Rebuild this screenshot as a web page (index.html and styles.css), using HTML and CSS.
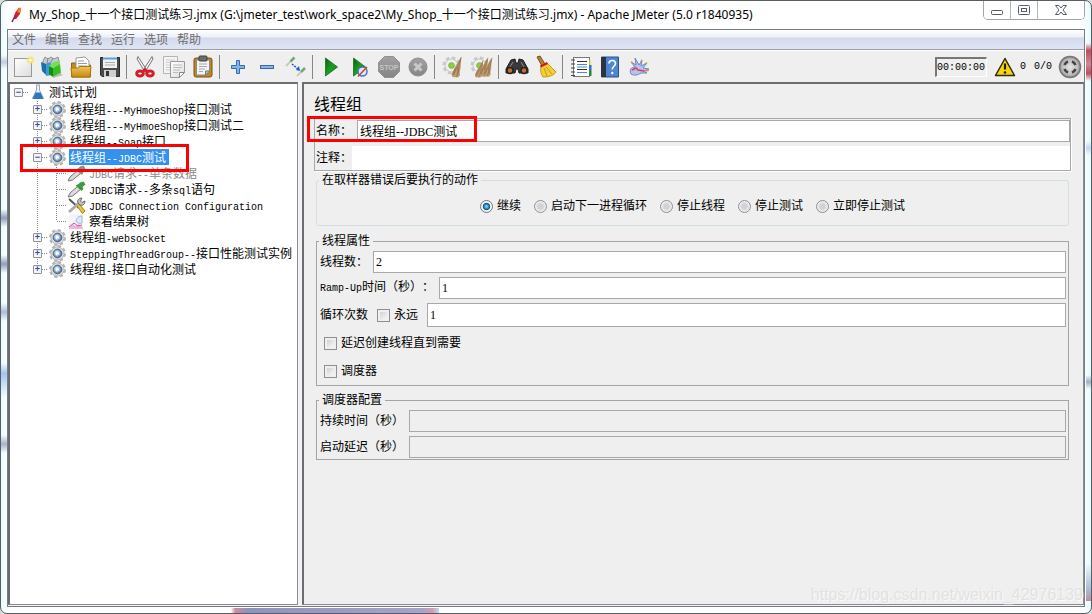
FILE: index.html
```html
<!DOCTYPE html>
<html lang="zh-CN">
<head>
<meta charset="utf-8">
<title>Apache JMeter</title>
<link rel="stylesheet" href="styles.css">
</head>
<body>
<svg class="defs" aria-hidden="true">
  <defs>
    <linearGradient id="gPlay" x1="0" y1="0" x2="1" y2="1"><stop offset="0" stop-color="#0b5d12"/><stop offset=".5" stop-color="#18a020"/><stop offset="1" stop-color="#0c7a14"/></linearGradient>
    <linearGradient id="gGray" x1="0" y1="0" x2="0" y2="1"><stop offset="0" stop-color="#a2a2a2"/><stop offset="1" stop-color="#858585"/></linearGradient>
    <linearGradient id="gPaper" x1="0" y1="0" x2="1" y2="1"><stop offset="0" stop-color="#fff"/><stop offset="1" stop-color="#dcdcdc"/></linearGradient>
    <linearGradient id="gGold" x1="0" y1="0" x2="0" y2="1"><stop offset="0" stop-color="#efc45a"/><stop offset="1" stop-color="#c98a10"/></linearGradient>
    <radialGradient id="gBall" cx=".45" cy=".45" r=".6"><stop offset="0" stop-color="#ffffff"/><stop offset=".35" stop-color="#c4daf0"/><stop offset=".75" stop-color="#5c86b8"/><stop offset="1" stop-color="#3f5f88"/></radialGradient>
    <radialGradient id="gRound"><stop offset="0" stop-color="#e4e4e4"/><stop offset=".75" stop-color="#bcbcbc"/><stop offset="1" stop-color="#8a8a8a"/></radialGradient>
    <symbol id="gear" viewBox="0 0 19 17">
      <circle cx="9.500" cy="8.500" r="7.200" fill="none" stroke="#b4b4b4" stroke-width="2.600" stroke-dasharray="3.200 2.450"/>
      <circle cx="9.500" cy="8.500" r="6.600" fill="#dadada" stroke="#b8b8b8"/>
      <circle cx="9.500" cy="8.500" r="4.300" fill="url(#gBall)" stroke="#54667e"/>
      <path d="M8 6.500l3.500 2L8 10.500z" fill="#fff"/>
    </symbol>
    <symbol id="gearGreen" viewBox="0 0 20 20">
      <circle cx="10" cy="10" r="7.500" fill="none" stroke="#c9c9c9" stroke-width="4" stroke-dasharray="3.500 2.400"/>
      <circle cx="10" cy="10" r="6.800" fill="#efefef" stroke="#c4c4c4"/>
      <circle cx="10" cy="10" r="3" fill="#8cd42c" stroke="#84ad55"/>
    </symbol>
    <symbol id="twig" viewBox="0 0 12 22">
      <path d="M10.500 1L5 10 1 18l1 3 6 .5 2-9z" fill="#bd9a70"/>
      <path d="M11 1L3 19M10.500 3L6 21M7 11l2 9M5 12l-3 7" stroke="#8d6a44" stroke-width=".7" fill="none"/>
    </symbol>
    <symbol id="sampler" viewBox="0 0 19 17">
      <path d="M1 16l2-4L10.500 5.500l3 3L5.500 15z" class="glass"/>
      <path d="M8.500 4.500L14.500 10l2-2-1-2L18.500 3.500 16.500 .5 13 1.500 11.500 3z" fill="currentColor"/>
    </symbol>
  </defs>
</svg>
<div class="window">
  <header class="titlebar">
    <svg class="app-icon" viewBox="0 0 12 18"><path d="M2 16l2-4" stroke="#5c2a6b" stroke-width="1.500"/><path d="M3 13L5 7l4-5.500 2 1L10 8l-4 5z" fill="#d3202f"/><path d="M7 6l2.500-4.500 1.800 1L10 7z" fill="#f08a1d"/><path d="M3.500 13l1.500-4 2 3z" fill="#9b1c6e"/></svg>
    <h1 class="title">My_Shop_十一个接口测试练习.jmx (G:\jmeter_test\work_space2\My_Shop_十一个接口测试练习.jmx) - Apache JMeter (5.0 r1840935)</h1>
    <div class="win-buttons">
      <button type="button" aria-label="最小化"><svg width="14" height="12" viewBox="0 0 14 12"><rect x="1.500" y="6.500" width="11" height="4" rx="1" fill="#fff" stroke="#555b66"/></svg></button>
      <button type="button" aria-label="最大化"><svg width="14" height="12" viewBox="0 0 14 12"><rect x="1.500" y="1.500" width="11" height="9" rx="1" fill="#fff" stroke="#555b66"/><rect x="4.500" y="4.500" width="5" height="3" fill="#fff" stroke="#555b66"/></svg></button>
      <button type="button" class="close" aria-label="关闭"><svg width="14" height="12" viewBox="0 0 14 12"><path d="M1.500 1.500h3.500L7 4l2-2.500h3.500L9 6l3.500 4.500H9L7 8l-2 2.500H1.500L5 6z" fill="#fff" stroke="#555b66"/></svg></button>
    </div>
  </header>
  <div class="frame">
    <nav class="menubar">
      <a href="#">文件</a><a href="#">编辑</a><a href="#">查找</a><a href="#">运行</a><a href="#">选项</a><a href="#">帮助</a>
    </nav>
    <div class="toolbar">
      <button type="button" aria-label="新建"><svg viewBox="0 0 24 24"><rect x="3.500" y="3.500" width="17" height="18" fill="url(#gPaper)" stroke="#999"/><circle cx="19.500" cy="5" r="3.500" fill="#f6e564" opacity=".85"/><circle cx="19.500" cy="5" r="1.500" fill="#fffbd0"/></svg></button>
      <button type="button" aria-label="模板"><svg viewBox="0 0 24 24"><path d="M3 6l2-4 3 2 3-2 3 2 4-2 1 4v6H3z" fill="#c3cbce" stroke="#87949a"/><path d="M8 3l-1 6M13 3l-3 6" stroke="#7d898e"/><path d="M1 7l5 2v11l-4-4z" fill="#1c6ea6"/><path d="M6 9l4-2 2 4v9l-6 1z" fill="#3c9ad6"/><path d="M9 11l4 2v9l-4-3z" fill="#178a12"/><path d="M13 13l7-4 1 9-8 4z" fill="#37bf20"/><path d="M14 7l5-1 1 3-7 4-4-2z" fill="#77dd55"/><path d="M20 18l3 2-10 3v-1z" fill="#b9b9b9"/></svg></button>
      <button type="button" aria-label="打开"><svg viewBox="0 0 24 24"><path d="M2.500 22V8h6l2 2h11v12z" fill="#c58c1c" stroke="#8d6510"/><path d="M7 15V3l9-1 4 4v9z" fill="#fff" stroke="#999"/><path d="M9 6h6M9 8.500h9M9 11h9" stroke="#999"/><path d="M3 22l-1-9h7l2-1.500h11L21 22z" fill="url(#gGold)" stroke="#a8780f"/></svg></button>
      <button type="button" aria-label="保存"><svg viewBox="0 0 24 24"><path d="M2.500 2.500h19v19H4l-1.500-1.500z" fill="#4b4b4b" stroke="#2c2c2c"/><rect x="5" y="2" width="14" height="11" fill="#eef2f5"/><path d="M5 3.500h14" stroke="#5c9fd0" stroke-width="2"/><path d="M7 7.500h10M7 10h10" stroke="#aaa"/><rect x="6" y="15" width="12" height="7" fill="#cfcfcf"/><rect x="8" y="16" width="3" height="5" fill="#333"/></svg></button>
      <span class="sep"></span>
      <button type="button" aria-label="剪切"><svg viewBox="0 0 24 24"><path d="M5 1.500l9 14-2 1.500L4 4zM19 1.500l-9 14 2 1.500L20 4z" fill="#f3f3f3" stroke="#777"/><ellipse cx="7" cy="18.500" rx="3.300" ry="2.600" fill="none" stroke="#d31c25" stroke-width="3"/><ellipse cx="17" cy="18.500" rx="3.300" ry="2.600" fill="none" stroke="#d31c25" stroke-width="3"/><path d="M9 15l3-2 3 2-3 2z" fill="#d31c25"/></svg></button>
      <button type="button" aria-label="复制"><svg viewBox="0 0 24 24"><path d="M1.500 1.500h14v17h-14z" fill="#f4f4f4" stroke="#b5b5b5"/><path d="M4 5h9M4 7.500h9M4 10h4M4 12.500h4M4 15h4" stroke="#ccc"/><path d="M8.500 6.500h14v11l-5 5h-9z" fill="url(#gPaper)" stroke="#999"/><path d="M11 10h9M11 12.500h9M11 15h7M11 17.500h5" stroke="#bbb"/><path d="M17.500 22.500v-5h5z" fill="#fff" stroke="#888"/></svg></button>
      <button type="button" aria-label="粘贴"><svg viewBox="0 0 24 24"><rect x="3" y="3" width="18" height="19" rx="2" fill="#c1852b" stroke="#7c5212"/><path d="M5.500 5h13v11l-4 4h-9z" fill="#f4f4f4" stroke="#8a8a8a"/><path d="M8 9h8M8 11.500h8M8 14h6M8 16.500h4" stroke="#aaa"/><rect x="8" y="1" width="8" height="5" rx="1" fill="#69706c" stroke="#3f4441"/><path d="M14.500 20v-4h4z" fill="#ccc" stroke="#777"/></svg></button>
      <span class="sep"></span>
      <button type="button" aria-label="展开"><svg viewBox="0 0 24 24"><path d="M10.500 5.500h3v5h5v3h-5v5h-3v-5h-5v-3h5z" fill="#84b4ea" stroke="#3669ad"/></svg></button>
      <button type="button" aria-label="折叠"><svg viewBox="0 0 24 24"><rect x="5.500" y="10.500" width="13" height="3" fill="#84b4ea" stroke="#3669ad"/></svg></button>
      <button type="button" aria-label="切换"><svg viewBox="0 0 24 24"><path d="M2 11l6-6M13 21l5-5" stroke="#c9c9c9" stroke-width="2"/><path d="M6.500 6.500l4-4M17 17l4-4" stroke="#74a873" stroke-width="2.500"/><path d="M8 9l6 5" stroke="#2458c8" stroke-width="1.500" stroke-dasharray="2 1"/><path d="M16 16l-1-5-3 4z" fill="#2458c8"/></svg></button>
      <span class="sep"></span>
      <button type="button" aria-label="启动"><svg viewBox="0 0 24 24"><path d="M6.500 3l12 9-12 9z" fill="url(#gPlay)" stroke="#2b7d31"/></svg></button>
      <button type="button" aria-label="不停顿启动"><svg viewBox="0 0 24 24"><path d="M5.500 3l12 9-12 9z" fill="url(#gPlay)" stroke="#2b7d31"/><circle cx="14.500" cy="16.500" r="4.500" fill="#dce9f8" stroke="#4377bf" stroke-width="1.500"/><path d="M10 21.500l9-9.500" stroke="#d4393b" stroke-width="1.500"/></svg></button>
      <button type="button" aria-label="停止" disabled><svg viewBox="0 0 24 24"><path d="M7.500 1.500h9l6 6v9l-6 6h-9l-6-6v-9z" fill="url(#gGray)" stroke="#919191"/><text x="12" y="15" text-anchor="middle" class="stop-text">STOP</text></svg></button>
      <button type="button" aria-label="关闭线程" disabled><svg viewBox="0 0 24 24"><circle cx="12" cy="12" r="9" fill="url(#gGray)" stroke="#8d8d8d"/><path d="M8.500 8.500l7 7M15.500 8.500l-7 7" stroke="#c8c8c8" stroke-width="3"/></svg></button>
      <span class="sep"></span>
      <button type="button" aria-label="清除"><svg viewBox="0 0 24 24"><use href="#gearGreen" x="1" y="1" width="19" height="19"/><use href="#twig" x="9" y="1" width="13" height="22"/></svg></button>
      <button type="button" aria-label="清除全部"><svg viewBox="0 0 24 24"><use href="#gearGreen" x="0" y="1" width="19" height="19"/><use href="#twig" x="4" y="5" width="10" height="18"/><use href="#twig" x="8" y="1" width="11" height="22"/><use href="#twig" x="12" y="1" width="11" height="22"/></svg></button>
      <span class="sep"></span>
      <button type="button" aria-label="查找"><svg viewBox="0 0 24 24"><path d="M6 5l4-1 1 4h2l1-4 4 1 5 9v4h-9l-1-4h-2l-1 4H1v-4z" fill="#3a3a3a" stroke="#1d1d1d"/><circle cx="5" cy="15.500" r="3" fill="#c86a34" stroke="#222" stroke-width="1.500"/><circle cx="19" cy="15.500" r="3" fill="#c86a34" stroke="#222" stroke-width="1.500"/><path d="M8 7l-3 5M16 7l3 5" stroke="#888"/></svg></button>
      <button type="button" aria-label="重置查找"><svg viewBox="0 0 24 24"><path d="M3 2l3-1 5 8-3 2z" fill="#b98034" stroke="#7a4d13"/><path d="M7 11l6-3 9 9c-2 3-6 5-13 5-2-3-3-6-2-11z" fill="#f3cf36" stroke="#c59c1a"/><path d="M6.500 11.500l7-3.500" stroke="#c52222" stroke-width="2.500"/><path d="M10 13l3 8M12 12l6 7" stroke="#c59c1a"/></svg></button>
      <span class="sep"></span>
      <button type="button" aria-label="函数助手"><svg viewBox="0 0 24 24"><rect x="4.500" y="2.500" width="16" height="19" fill="#fff" stroke="#777"/><path d="M2 5h4M2 9h4M2 13h4M2 17h4M2 20.500h4" stroke="#444"/><path d="M8 6.500h10M8 14.500h10" stroke="#333"/><path d="M8 9.500h10M8 12h10M8 17.500h10" stroke="#4a86d8"/><path d="M21.500 5v5" stroke="#e8e9a0" stroke-width="2"/><path d="M21.500 10v5" stroke="#2b6fd0" stroke-width="2"/><path d="M21.500 15v6" stroke="#1b8a2c" stroke-width="2"/></svg></button>
      <button type="button" aria-label="帮助"><svg viewBox="0 0 24 24"><path d="M3.500 2h17v20h-17z" fill="#4d86cf" stroke="#2c5087"/><path d="M3 2h5v20H3z" fill="#2a3442"/><path d="M11 8.500c0-4 6.500-4 6.500 0 0 3-3.200 2.500-3.200 6" stroke="#fff" stroke-width="1.600" fill="none"/><circle cx="14.300" cy="18" r="1.200" fill="#fff"/></svg></button>
      <button type="button" aria-label="Apache"><svg viewBox="0 0 24 24"><path d="M4 19c-2-4 0-7 4-7L4 7l5 3-1-7 4 7 3-5-1 6 6-3-4 5 6 1-5 2 3 2-6 0c-3 2-7 3-10 1z" fill="#b4c2ec" stroke="#7284ca"/><path d="M5 15l4-2 2 2 6 1" stroke="#d6414d" stroke-width="1.500" fill="none"/><path d="M19 16l3-1M14 5l1 1M4 7l2 1M18 9l2-1" stroke="#e0963c" stroke-width="1.500"/></svg></button>
      <div class="status">
        <output class="timer">00:00:00</output>
        <svg class="warn" viewBox="0 0 22 20"><path d="M11 1.500L20.500 18.500h-19z" fill="#f8d408" stroke="#2b2a10" stroke-width="1.500" stroke-linejoin="round"/><path d="M11 6.500v6" stroke="#222" stroke-width="2.200"/><circle cx="11" cy="15.500" r="1.300" fill="#222"/></svg>
        <span class="count">0</span><span class="count total">0/0</span>
        <svg class="round" viewBox="0 0 24 24"><circle cx="12" cy="12" r="10.500" fill="url(#gRound)" stroke="#777" stroke-width="1.500"/><path d="M6.500 10A6 6 0 0 1 10 6.500M14 6.500A6 6 0 0 1 17.500 10M17.500 14A6 6 0 0 1 14 17.500M10 17.500A6 6 0 0 1 6.500 14" stroke="#444" stroke-width="2.600" fill="none"/></svg>
      </div>
    </div>
    <div class="panes">
      <aside class="tree-pane">
        <div class="row"><button type="button" class="exp" aria-label="折叠">−</button><i class="dots"></i>
          <svg class="flask" viewBox="0 0 16 16"><path d="M6 1h4M6.500 1v5L2.500 14.500h11L9.500 6V1" fill="#e9f0f7" stroke="#97a6b5"/><path d="M5.500 8.500h5l3 6.500h-11z" fill="#2e78bd"/></svg><span class="label">测试计划</span></div>
        <ul class="level1">
          <li class="row"><button type="button" class="exp" aria-label="展开">+</button><i class="dots"></i><svg class="node"><use href="#gear"/></svg><span class="label">线程组<b>---MyHmoeShop</b>接口测试</span></li>
          <li class="row"><button type="button" class="exp" aria-label="展开">+</button><i class="dots"></i><svg class="node"><use href="#gear"/></svg><span class="label">线程组<b>---MyHmoeShop</b>接口测试二</span></li>
          <li class="row"><button type="button" class="exp" aria-label="展开">+</button><i class="dots"></i><svg class="node"><use href="#gear"/></svg><span class="label">线程组<b>--Soap</b>接口</span></li>
          <li>
            <div class="row marked"><button type="button" class="exp" aria-label="折叠">−</button><i class="dots"></i><svg class="node"><use href="#gear"/></svg><span class="label selected">线程组<b>--JDBC</b>测试</span></div>
            <ul class="level2">
              <li class="row"><i class="dots"></i><svg class="node off"><use href="#sampler"/></svg><span class="label disabled"><b>JDBC</b>请求<b>--</b>单条数据</span></li>
              <li class="row"><i class="dots"></i><svg class="node on"><use href="#sampler"/></svg><span class="label"><b>JDBC</b>请求<b>--</b>多条<b>sql</b>语句</span></li>
              <li class="row"><i class="dots"></i><svg class="node" viewBox="0 0 19 17"><path d="M2 2l10 9" stroke="#555" stroke-width="1.800"/><path d="M10 9l2-2 6 7-2.500 2.500z" fill="#f0c52a" stroke="#a67d0d"/><path d="M2 15L12 6" stroke="#aaa" stroke-width="3"/><path d="M11 6c-1-3 1-5 4-5l-1.500 3L15 5.500 18 4c0 3-2 5-5 4z" fill="#c5c5c5" stroke="#666"/></svg><span class="label"><b>JDBC Connection Configuration</b></span></li>
              <li class="row"><i class="dots"></i><svg class="node" viewBox="0 0 19 17"><rect x="2" y="1" width="14" height="15" fill="#f6f4fb"/><path d="M2 15l4-4 3 2 3-2 4 4v1H2z" fill="#efb5d8"/><path d="M2 14l5-4 4 3 4-1" stroke="#c657a0" fill="none"/><path d="M9 8c1-4 3-5 6-5v7c-3 1-5 0-6-2z" fill="#dce9fa" stroke="#9db9e2"/></svg><span class="label">察看结果树</span></li>
            </ul>
          </li>
          <li class="row"><button type="button" class="exp" aria-label="展开">+</button><i class="dots"></i><svg class="node"><use href="#gear"/></svg><span class="label">线程组<b>-websocket</b></span></li>
          <li class="row"><button type="button" class="exp" aria-label="展开">+</button><i class="dots"></i><svg class="node"><use href="#gear"/></svg><span class="label"><b>SteppingThreadGroup--</b>接口性能测试实例</span></li>
          <li class="row"><button type="button" class="exp" aria-label="展开">+</button><i class="dots"></i><svg class="node"><use href="#gear"/></svg><span class="label">线程组<b>-</b>接口自动化测试</span></li>
        </ul>
      </aside>
      <main class="editor">
        <h2>线程组</h2>
        <div class="ident">
          <div class="field name"><label for="name">名称：</label><input id="name" type="text" value="线程组--JDBC测试"></div>
          <div class="field note"><label for="note">注释：</label><input id="note" type="text"></div>
        </div>
        <fieldset class="action">
          <legend>在取样器错误后要执行的动作</legend>
          <label><input type="radio" name="act" checked>继续</label>
          <label><input type="radio" name="act">启动下一进程循环</label>
          <label><input type="radio" name="act">停止线程</label>
          <label><input type="radio" name="act">停止测试</label>
          <label><input type="radio" name="act">立即停止测试</label>
        </fieldset>
        <fieldset class="props">
          <legend>线程属性</legend>
          <div class="field"><label for="threads">线程数：</label><input id="threads" type="text" value="2"></div>
          <div class="field"><label for="ramp"><b>Ramp-Up</b>时间（秒）：</label><input id="ramp" type="text" value="1"></div>
          <div class="field loops"><label for="loops">循环次数</label><label class="check"><input type="checkbox">永远</label><input id="loops" type="text" value="1"></div>
          <label class="check line"><input type="checkbox">延迟创建线程直到需要</label>
          <label class="check line"><input type="checkbox">调度器</label>
        </fieldset>
        <fieldset class="sched">
          <legend>调度器配置</legend>
          <div class="field"><label for="dur">持续时间（秒）</label><input id="dur" type="text" disabled></div>
          <div class="field"><label for="delay">启动延迟（秒）</label><input id="delay" type="text" disabled></div>
        </fieldset>
      </main>
    </div>
  </div>
  <div class="watermark">https://blog.csdn.net/weixin_42976139</div>
</div>
</body>
</html>
```
FILE: styles.css
```css
*, *::before, *::after { box-sizing: border-box; }
body {
  margin: 0;
  background: #d9dcdd;
  font: 12px/16px "Liberation Serif", "Noto Sans CJK SC", sans-serif;
  color: #000;
  text-spacing-trim: space-all;
}
button, input { font: inherit; color: inherit; margin: 0; padding: 0; }
button { background: none; border: 0; }
ul { list-style: none; margin: 0; padding: 0; }
b { font: 10px/16px "Liberation Mono", monospace; }
.defs { position: absolute; width: 0; height: 0; }

.window {
  position: relative;
  display: flex;
  flex-direction: column;
  height: 100vh;
  padding: 0 6px 6px;
  border: 1px solid #5b5e60;
  border-radius: 7px;
  background:
    linear-gradient(90deg, #cfe4ff00, #d08ba0 2%, #8f93bb 8%, #a6a4c8 92%, #d59bb0 97%, #b9dcff) 230px 100% / 208px 5px no-repeat,
    linear-gradient(#c8485800, #c84858 20%, #d58594 55%, #c84858 80%, #c8485800) 100% 42px / 5px 38px no-repeat,
    linear-gradient(#b8d4f000, #a9bbd8 70%, #c08ba0) 100% 562px / 5px 38px no-repeat,
    linear-gradient(#9cb0c800, #9cb0c8, #9cb0c800) 100% 374px / 5px 14px no-repeat,
    linear-gradient(#bcd9f500, #bcd9f5, #bcd9f500) 100% 140px / 5px 14px no-repeat,
    linear-gradient(#8e9fb800, #8e9fb8, #8e9fb800) 0 208px / 6px 18px no-repeat,
    linear-gradient(#8e9fb800, #8e9fb8, #8e9fb800) 0 254px / 6px 18px no-repeat,
    linear-gradient(#a9bcdc00, #a9bcdc, #a9bcdc00) 0 302px / 6px 18px no-repeat,
    linear-gradient(#a4c4f000, #a4c4f0 30%, #a4c4f000) 0 362px / 6px 34px no-repeat,
    linear-gradient(#a4b4cc00, #a4b4cc, #a4b4cc00) 0 434px / 6px 18px no-repeat,
    linear-gradient(#c0cce400, #c0cce4, #c0cce400) 0 54px / 6px 14px no-repeat,
    linear-gradient(90deg, #e9fcff, #fff 8px, #fff calc(100% - 8px), #e2fbff);
}
.titlebar { display: flex; align-items: flex-start; height: 28px; flex: none; padding-left: 3px; }
.app-icon { width: 12px; height: 18px; margin-top: 5px; }
.title {
  flex: 1;
  margin: 5px 0 0 7px;
  font: 12px/18px "Noto Sans", "Noto Sans CJK SC", sans-serif;
  white-space: nowrap;
}
.win-buttons { display: flex; border: 1px solid #a2a5a8; border-top: 0; border-radius: 0 0 5px 5px; overflow: hidden; }
.win-buttons button { width: 27px; height: 18px; border-right: 1px solid #b4b7ba; background: #fff; line-height: 0; }
.win-buttons .close { width: 46px; border-right: 0; }

.frame { flex: 1; min-height: 0; display: flex; flex-direction: column; border: 1px solid #777b82; background: #efefef; }
.menubar {
  display: flex;
  gap: 9px;
  height: 20px;
  flex: none;
  padding: 2px 4px;
  border-bottom: 1px solid #9a9da6;
  background: linear-gradient(#fff, #eef0f8 7px, #d4daec 8px, #dfe5f4);
}
.menubar a { color: #6d6d6d; text-decoration: none; }
.toolbar { display: flex; align-items: center; height: 32px; flex: none; border-top: 1px solid #fff; }
.toolbar button { width: 29px; height: 29px; line-height: 0; }
.toolbar button svg { width: 24px; height: 24px; }
.sep { width: 2px; height: 24px; margin: 0 2px; border-left: 1px solid #868686; }
.stop-text { font: bold 7px "Liberation Sans", sans-serif; fill: #c5c5c5; }
.status { display: flex; align-items: center; margin-left: auto; padding-right: 2px; }
.timer {
  width: 52px;
  height: 20px;
  border: 1px solid #fff;
  border-top: 2px solid #777;
  border-left: 2px solid #777;
  font: 10px/17px "Liberation Mono", monospace;
}
.warn { width: 22px; height: 20px; margin-left: 7px; }
.count { margin-left: 4px; font: 10px/16px "Liberation Mono", monospace; }
.total { margin: 0 6px 0 8px; }
.round { width: 24px; height: 24px; }

.panes { flex: 1; min-height: 0; display: grid; grid-template-columns: 290px minmax(0, 1fr); gap: 4px; padding-bottom: 1px; background: #f3f3f3; }
.tree-pane { border: 1px solid #7d8088; border-width: 2px 1px 1px 2px; border-color: #6b6d72 #8b8d95 #8b8d95 #6b6d72; background: #fff; }
.row { display: flex; align-items: center; height: 16px; white-space: nowrap; }
.tree-pane > .row { padding-left: 4px; }
.exp { flex: none; width: 9px; height: 9px; border: 1px solid #8f9299; border-radius: 1px; background: #f4f4f4; color: #2c4f9a; font: bold 9px/7px "Liberation Sans", sans-serif; }
.dots { flex: none; width: 6px; height: 1px; background: repeating-linear-gradient(90deg, #888 0 1px, #fff 1px 2px); }
.flask { flex: none; width: 16px; height: 16px; margin-left: 1px; }
.node { flex: none; width: 19px; height: 17px; }
.label { height: 16px; padding: 0 3px 0 1px; margin-left: 2px; line-height: 18px; }
.label b { line-height: 16px; }
.selected { background: #3391f0; color: #fff; }
.disabled { color: #8a8a8a; }
.glass { fill: #dcdcdc; stroke: #777; }
.off { color: #8e8e8e; }
.off .glass { fill: #8e8e8e; }
.on { color: #3f9b3c; }
.level1 { margin-top: 1px; background: repeating-linear-gradient(#888 0 1px, #fff 1px 2px) 27px 0 / 1px calc(100% - 8px) no-repeat; }
.level1 > .row, .marked { padding-left: 23px; }
.level2 { background: repeating-linear-gradient(#888 0 1px, #fff 1px 2px) 46px 0 / 1px calc(100% - 8px) no-repeat; }
.level2 .row { padding-left: 47px; }
.level2 .dots { width: 10px; }
.marked { position: relative; }
.marked::after { content: ""; position: absolute; left: 10px; top: -5px; width: 169px; height: 28px; border: 3px solid #f00; z-index: 1; }

.editor { padding: 9px 12px 9px 10px; border: 1px solid #8b8d95; border-width: 2px 1px 1px 2px; border-color: #6b6d72 #8b8d95 #8b8d95 #6b6d72; background: #efefef; }
h2 { margin: 0 0 5px; font: 16px/20px "Noto Sans CJK SC", sans-serif; }
.ident { position: relative; padding-top: 1px; border: 1px solid #a9a9a9; box-shadow: 1px 1px #fff; }
.ident::after { content: ""; position: absolute; left: -8px; top: -3px; width: 170px; height: 26px; border: 3px solid #f00; }
.field { display: flex; align-items: center; }
.field label { flex: none; }
.ident label { padding-left: 1px; }
.field input[type="text"] {
  flex: 1;
  min-width: 0;
  height: 22px;
  padding: 0 2px;
  border: 1px solid #a6a8ac;
  border-radius: 0;
  background: #fff;
  font: 12px/20px "Liberation Serif", "Noto Sans CJK SC", serif;
}
.field input:disabled { background: #efefef; }
.name { gap: 5px; margin-bottom: 4px; }
.field.note input { height: 24px; border: 0; }
fieldset { min-width: 0; margin: 0 2px; padding: 0 2px; border: 1px solid #a4a4a4; }
legend { height: 16px; padding: 0 3px; }
.action { display: flex; justify-content: center; gap: 13px; height: 54px; border-color: #d3dde4; border-radius: 3px; margin-top: 1px; padding-top: 10px; }
.action label { display: flex; align-items: center; height: 16px; gap: 4px; }
input[type="radio"] { appearance: none; width: 13px; height: 13px; border: 1px solid #8e8f8f; border-radius: 50%; background: radial-gradient(#cfd3d8 0 30%, #f5f5f5 75%); }
input[type="radio"]:checked { background: radial-gradient(circle closest-side, #65c8ee 0 15%, #17507a 60%, #f5f5f5 75%); border-color: #6a7a88; }
.props { margin-top: 7px; }
.props .field, .sched .field { margin: 0 0 4px 1px; gap: 5px; }
.props legend + .field, .sched legend + .field { margin-top: 2px; }
.props .loops { margin-bottom: 2px; }
.field.loops input[type="text"] { height: 24px; }
.loops .check { margin: 0 4px; }
.check { display: flex; align-items: center; gap: 4px; }
.check.line { height: 28px; padding-left: 5px; }
input[type="checkbox"] { appearance: none; width: 13px; height: 13px; border: 1px solid #8e8f8f; background: linear-gradient(135deg, #cfd3d8, #f6f6f6) content-box #f4f4f4; padding: 2px; }
.sched { margin-top: 6px; }
.sched .field:last-child { margin-bottom: 1px; }
.watermark {
  position: absolute;
  right: 8px;
  bottom: 8px;
  font: 16px/20px "Liberation Sans", sans-serif;
  color: #e2e2e2;
  text-shadow: 1px 1px #fafafa;
}
```
